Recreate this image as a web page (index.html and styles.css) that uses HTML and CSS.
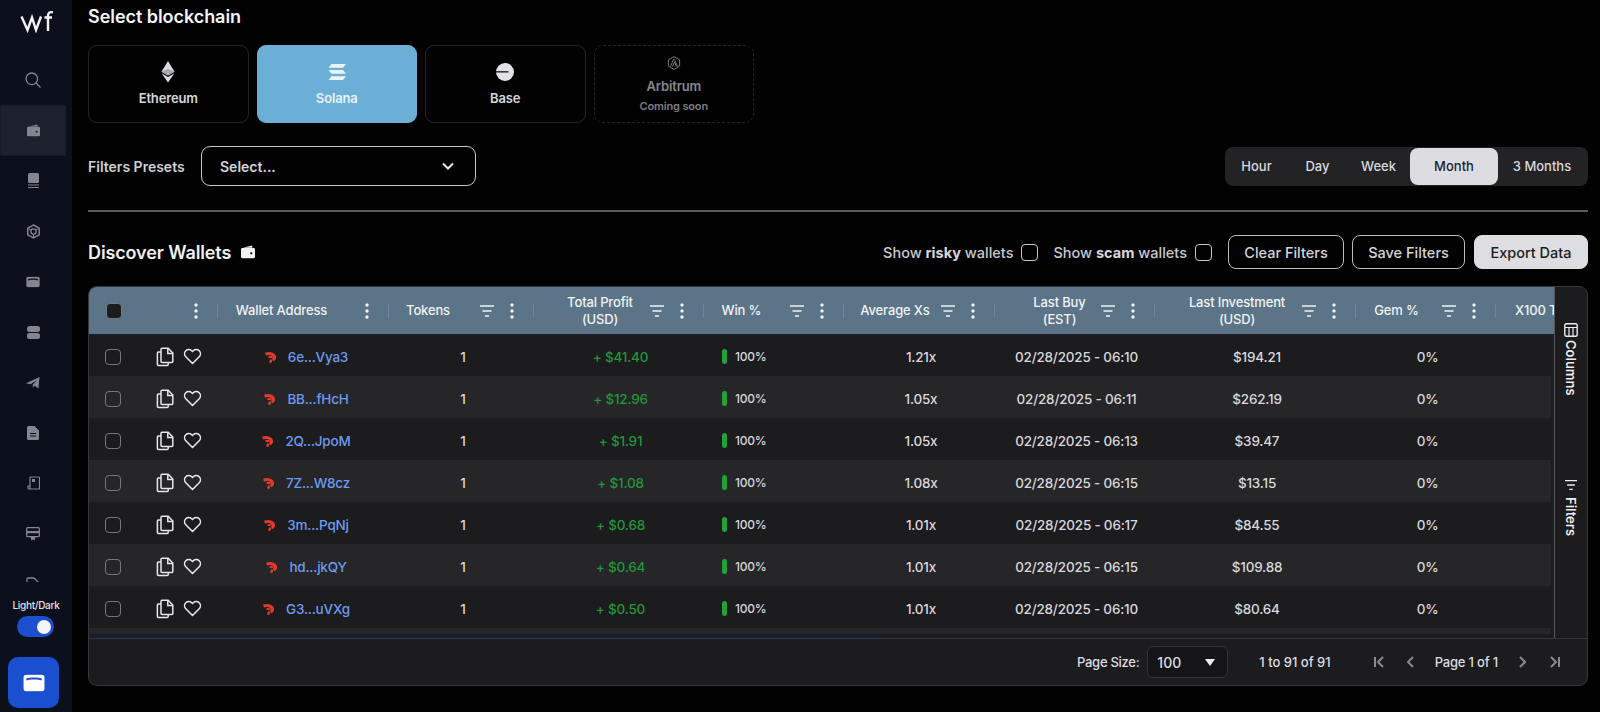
FILE: index.html
```html
<!DOCTYPE html>
<html lang="en">
<head>
<meta charset="utf-8">
<title>Discover Wallets</title>
<link rel="stylesheet" href="styles.css">
</head>
<body>
<svg class="defs" width="0" height="0" aria-hidden="true">
  <symbol id="i-filter" viewBox="0 0 16 14"><path d="M1 2h14M3.500 7h9M6 12h4" fill="none" stroke="currentColor" stroke-width="1.500"/></symbol>
  <symbol id="i-dots" viewBox="0 0 6 16"><circle cx="3" cy="2" r="1.700" fill="currentColor"/><circle cx="3" cy="8" r="1.700" fill="currentColor"/><circle cx="3" cy="14" r="1.700" fill="currentColor"/></symbol>
  <symbol id="i-copy" viewBox="0 0 18 20"><path d="M6 1.200h6.200L16.800 6v8.400a1 1 0 0 1-1 1H6a1 1 0 0 1-1-1V2.200a1 1 0 0 1 1-1z" fill="none" stroke="currentColor" stroke-width="1.500"/><path d="M11.800 1.500v5h4.800" fill="none" stroke="currentColor" stroke-width="1.500"/><path d="M5 5H2.400a1 1 0 0 0-1 1v11.600a1 1 0 0 0 1 1h8.800a1 1 0 0 0 1-1V15.400" fill="none" stroke="currentColor" stroke-width="1.500"/></symbol>
  <symbol id="i-heart" viewBox="0 0 20 18"><path d="M10 16.400 2.900 9.300a4.500 4.500 0 0 1 0-6.300 4.400 4.400 0 0 1 6.300 0l.8.800.8-.800a4.400 4.400 0 0 1 6.300 0 4.500 4.500 0 0 1 0 6.300z" fill="none" stroke="currentColor" stroke-width="1.600" stroke-linejoin="round"/></symbol>
  <symbol id="i-shrimp" viewBox="0 0 16 14"><path d="M0.500 1 4 3" fill="none" stroke="#3a1512" stroke-width="1"/><path d="M3.500 4C7 3 10.500 3.500 12 5.500c1 1.800.4 3.500-1.300 4.500" fill="none" stroke="#e23a2c" stroke-width="3"/><path d="M6.500 7h4" fill="none" stroke="#e23a2c" stroke-width="1.800"/><path d="M9.500 9.500 8 12.800" fill="none" stroke="#e23a2c" stroke-width="2.400"/></symbol>
  <symbol id="i-wallet" viewBox="0 0 18 16"><path d="M3 3.200 12.500.800c.9-.2 1.500.3 1.500 1.200v1.200z" fill="currentColor"/><path d="M2.500 3.500h13A1.500 1.500 0 0 1 17 5v8.500a1.500 1.500 0 0 1-1.500 1.500h-13A1.500 1.500 0 0 1 1 13.500V5a1.500 1.500 0 0 1 1.500-1.500zM12.800 8.200a1.300 1.300 0 1 0 0 2.600 1.300 1.300 0 0 0 0-2.600z" fill="currentColor" fill-rule="evenodd"/></symbol>
  <symbol id="i-card" viewBox="0 0 20 16"><path d="M3 .5h14A2.500 2.500 0 0 1 19.500 3v10a2.500 2.500 0 0 1-2.500 2.500H3A2.500 2.500 0 0 1 .5 13V3A2.500 2.500 0 0 1 3 .5zM3 4v1.800C6 4.500 14 4.500 17 5.800V4C14 2.800 6 2.800 3 4z" fill="currentColor" fill-rule="evenodd"/></symbol>
</svg>

<aside class="sidebar">
  <div class="logo" role="img" aria-label="wf logo">
    <svg width="34" height="24" viewBox="0 0 34 24"><path d="M1.500 7.500 7.500 21 12 8.500 16 21 21 7.500" fill="none" stroke="#f4f4f6" stroke-width="2.400"/><path d="M33 3.400C29.500 2.400 28 3.800 28 7v15M24.500 8.500H32" fill="none" stroke="#f4f4f6" stroke-width="2.400"/></svg>
  </div>
  <nav class="nav">
    <a class="nav-item"><svg width="18" height="18" viewBox="0 0 18 18"><circle cx="7.800" cy="7.800" r="5.800" fill="none" stroke="currentColor" stroke-width="1.300"/><path d="m12 12 4.500 4.500" stroke="currentColor" stroke-width="1.300"/></svg></a>
    <a class="nav-item nav-item-active"><svg width="15" height="13" viewBox="0 0 18 16"><use href="#i-wallet"/></svg></a>
    <a class="nav-item"><svg width="13" height="16" viewBox="0 0 13 16"><rect x="1" y="0" width="11" height="10" rx="1.500" fill="currentColor"/><path d="M1 12h11M1 14.500h11" stroke="currentColor" stroke-width="1.200"/></svg></a>
    <a class="nav-item"><svg width="15" height="15" viewBox="0 0 15 15"><path d="M7.500 1 13.200 4.200v6.600L7.500 14 1.800 10.800V4.200z" fill="none" stroke="currentColor" stroke-width="1.500"/><circle cx="7.500" cy="7.500" r="2.600" fill="none" stroke="currentColor" stroke-width="1.300"/><path d="M7.500 10v3.500M5.200 6.200 2.500 4.500M9.800 6.200l2.700-1.700" stroke="currentColor" stroke-width="1"/></svg></a>
    <a class="nav-item"><svg width="14" height="12" viewBox="0 0 20 16"><use href="#i-card"/></svg></a>
    <a class="nav-item"><svg width="13" height="13" viewBox="0 0 13 13"><rect x="0" y="0" width="13" height="6" rx="2.500" fill="currentColor"/><rect x="0" y="7" width="13" height="6" rx="2.500" fill="currentColor"/></svg></a>
    <a class="nav-item"><svg width="14" height="12" viewBox="0 0 14 12"><path d="M0 6.300 13.500 0 12.500 11.500 8.500 8.800 6.800 11V7.500L11 3 4.500 7.300z" fill="currentColor"/></svg></a>
    <a class="nav-item"><svg width="12" height="14" viewBox="0 0 12 14"><path d="M1.500 0h6L12 4.500v8a1.500 1.500 0 0 1-1.500 1.500h-9A1.500 1.500 0 0 1 0 12.500v-11A1.500 1.500 0 0 1 1.500 0zM3 7v1h6V7zM3 9.500v1h6v-1z" fill="currentColor" fill-rule="evenodd"/></svg></a>
    <a class="nav-item"><svg width="13" height="14" viewBox="0 0 13 14"><path d="M3 13V2a1 1 0 0 1 1-1h7.500a1 1 0 0 1 1 1v11H3zM3 10H1v2a1 1 0 0 0 1 1h8" fill="none" stroke="currentColor" stroke-width="1.200"/><rect x="5" y="3" width="3" height="3" fill="currentColor"/></svg></a>
    <a class="nav-item"><svg width="14" height="14" viewBox="0 0 14 14"><rect x=".7" y=".7" width="12.600" height="9" rx="1" fill="none" stroke="currentColor" stroke-width="1.300"/><rect x=".7" y="4" width="12.600" height="2.200" fill="currentColor"/><path d="M4.500 10h5l-1 3.500-1.500-1-1.500 1z" fill="currentColor"/></svg></a>
    <a class="nav-item"><svg width="14" height="14" viewBox="0 0 14 14"><path d="M1 13V2a1 1 0 0 1 1-1h6l4 4v8" fill="none" stroke="currentColor" stroke-width="1.300"/></svg></a>
  </nav>
  <div class="theme">
    <span class="theme-label">Light/Dark</span>
    <span class="toggle"><span class="toggle-knob"></span></span>
  </div>
  <a class="wallet-btn"><svg width="22" height="18" viewBox="0 0 20 16"><use href="#i-card"/></svg></a>
</aside>

<main class="main">
  <h2 class="section-title">Select blockchain</h2>
  <div class="chains">
    <button class="chain">
      <span class="chain-icon"><svg width="14" height="22" viewBox="0 0 14 22"><path d="M7 0 13.500 10.700 7 14.500.5 10.700z" fill="#dcdce0"/><path d="M7 16 13.500 12.200 7 21.500.5 12.200z" fill="#dcdce0"/><path d="M.5 10.700 7 7.800l6.500 2.900L7 14.500z" fill="#a9a9b0"/></svg></span>
      <span class="chain-name">Ethereum</span>
    </button>
    <button class="chain chain-active">
      <span class="chain-icon"><svg width="18" height="16" viewBox="0 0 18 16"><path d="M3.500 0H18l-3 3.800H.5zM.5 6h14.500l3 3.800H3.500zM3.500 12.200H18L15 16H.5z" fill="#eaf4fa"/></svg></span>
      <span class="chain-name">Solana</span>
    </button>
    <button class="chain">
      <span class="chain-icon"><svg width="18" height="18" viewBox="0 0 18 18"><circle cx="9" cy="9" r="9" fill="#e2e2e6"/><rect x="0" y="8.200" width="12.500" height="1.300" fill="#111"/></svg></span>
      <span class="chain-name">Base</span>
    </button>
    <button class="chain chain-soon">
      <svg width="14" height="14" viewBox="0 0 14 14"><path d="M7 .6 12.600 3.800v6.400L7 13.400 1.400 10.200V3.800z" fill="none" stroke="#77777c" stroke-width="1"/><path d="M3.500 10.500 6.500 3.500h1L10.500 10.500M5.500 10.500l2-4.500 2 4.500" fill="none" stroke="#77777c" stroke-width="1"/></svg>
      <span class="chain-name">Arbitrum</span>
      <span class="chain-note">Coming soon</span>
    </button>
  </div>

  <div class="filters-row">
    <span class="filters-label">Filters Presets</span>
    <div class="select">
      <span>Select...</span>
      <svg width="14" height="9" viewBox="0 0 14 9"><path d="m2 1.500 5 5 5-5" fill="none" stroke="#e6e6ea" stroke-width="2"/></svg>
    </div>
    <div class="periods">
      <span class="period">Hour</span>
      <span class="period">Day</span>
      <span class="period">Week</span>
      <span class="period period-active">Month</span>
      <span class="period">3 Months</span>
    </div>
  </div>

  <hr class="divider">

  <div class="discover-row">
    <h2 class="discover-title">Discover Wallets</h2>
    <svg class="discover-icon" width="16" height="14" viewBox="0 0 18 16"><use href="#i-wallet"/></svg>
    <label class="check-label"><span>Show <b>risky</b> wallets</span><span class="check-box"></span></label>
    <label class="check-label"><span>Show <b>scam</b> wallets</span><span class="check-box"></span></label>
    <button class="btn">Clear Filters</button>
    <button class="btn">Save Filters</button>
    <button class="btn btn-solid">Export Data</button>
  </div>

  <section class="grid">
    <div class="grid-body">
      <div class="grid-main">
        <div class="row head">
          <div class="hc hc-select"><span class="cb cb-head"></span><svg class="dots" width="6" height="16"><use href="#i-dots"/></svg></div>
          <div class="hc"><span class="hc-title t-wallet">Wallet Address</span><svg class="dots" width="6" height="16"><use href="#i-dots"/></svg></div>
          <div class="hc"><span class="hc-title t-tokens">Tokens</span><svg class="fil" width="16" height="14"><use href="#i-filter"/></svg><svg class="dots" width="6" height="16"><use href="#i-dots"/></svg></div>
          <div class="hc"><span class="hc-title t-profit">Total Profit<br>(USD)</span><svg class="fil" width="16" height="14"><use href="#i-filter"/></svg><svg class="dots" width="6" height="16"><use href="#i-dots"/></svg></div>
          <div class="hc"><span class="hc-title t-win">Win %</span><svg class="fil" width="16" height="14"><use href="#i-filter"/></svg><svg class="dots" width="6" height="16"><use href="#i-dots"/></svg></div>
          <div class="hc"><span class="hc-title t-avg">Average Xs</span><svg class="fil" width="16" height="14"><use href="#i-filter"/></svg><svg class="dots" width="6" height="16"><use href="#i-dots"/></svg></div>
          <div class="hc"><span class="hc-title t-buy">Last Buy<br>(EST)</span><svg class="fil" width="16" height="14"><use href="#i-filter"/></svg><svg class="dots" width="6" height="16"><use href="#i-dots"/></svg></div>
          <div class="hc"><span class="hc-title t-invest">Last Investment<br>(USD)</span><svg class="fil" width="16" height="14"><use href="#i-filter"/></svg><svg class="dots" width="6" height="16"><use href="#i-dots"/></svg></div>
          <div class="hc"><span class="hc-title t-gem">Gem %</span><svg class="fil" width="16" height="14"><use href="#i-filter"/></svg><svg class="dots" width="6" height="16"><use href="#i-dots"/></svg></div>
          <div class="hc hc-last"><span class="hc-title">X100 Tokens</span></div>
        </div>

        <div class="row">
          <div class="c c-select"><span class="cb"></span><svg class="copy" width="18" height="20"><use href="#i-copy"/></svg><svg class="heart" width="19" height="17" viewBox="0 0 20 18"><use href="#i-heart"/></svg></div>
          <div class="c"><svg class="shrimp" width="16" height="14"><use href="#i-shrimp"/></svg><a class="addr">6e...Vya3</a></div>
          <div class="c">1</div><div class="c c-profit">+ $41.40</div>
          <div class="c c-win"><span class="bar"></span>100%</div>
          <div class="c">1.21x</div><div class="c">02/28/2025 - 06:10</div><div class="c">$194.21</div><div class="c">0%</div><div class="c"></div>
        </div>
        <div class="row alt">
          <div class="c c-select"><span class="cb"></span><svg class="copy" width="18" height="20"><use href="#i-copy"/></svg><svg class="heart" width="19" height="17" viewBox="0 0 20 18"><use href="#i-heart"/></svg></div>
          <div class="c"><svg class="shrimp" width="16" height="14"><use href="#i-shrimp"/></svg><a class="addr">BB...fHcH</a></div>
          <div class="c">1</div><div class="c c-profit">+ $12.96</div>
          <div class="c c-win"><span class="bar"></span>100%</div>
          <div class="c">1.05x</div><div class="c">02/28/2025 - 06:11</div><div class="c">$262.19</div><div class="c">0%</div><div class="c"></div>
        </div>
        <div class="row">
          <div class="c c-select"><span class="cb"></span><svg class="copy" width="18" height="20"><use href="#i-copy"/></svg><svg class="heart" width="19" height="17" viewBox="0 0 20 18"><use href="#i-heart"/></svg></div>
          <div class="c"><svg class="shrimp" width="16" height="14"><use href="#i-shrimp"/></svg><a class="addr">2Q...JpoM</a></div>
          <div class="c">1</div><div class="c c-profit">+ $1.91</div>
          <div class="c c-win"><span class="bar"></span>100%</div>
          <div class="c">1.05x</div><div class="c">02/28/2025 - 06:13</div><div class="c">$39.47</div><div class="c">0%</div><div class="c"></div>
        </div>
        <div class="row alt">
          <div class="c c-select"><span class="cb"></span><svg class="copy" width="18" height="20"><use href="#i-copy"/></svg><svg class="heart" width="19" height="17" viewBox="0 0 20 18"><use href="#i-heart"/></svg></div>
          <div class="c"><svg class="shrimp" width="16" height="14"><use href="#i-shrimp"/></svg><a class="addr">7Z...W8cz</a></div>
          <div class="c">1</div><div class="c c-profit">+ $1.08</div>
          <div class="c c-win"><span class="bar"></span>100%</div>
          <div class="c">1.08x</div><div class="c">02/28/2025 - 06:15</div><div class="c">$13.15</div><div class="c">0%</div><div class="c"></div>
        </div>
        <div class="row">
          <div class="c c-select"><span class="cb"></span><svg class="copy" width="18" height="20"><use href="#i-copy"/></svg><svg class="heart" width="19" height="17" viewBox="0 0 20 18"><use href="#i-heart"/></svg></div>
          <div class="c"><svg class="shrimp" width="16" height="14"><use href="#i-shrimp"/></svg><a class="addr">3m...PqNj</a></div>
          <div class="c">1</div><div class="c c-profit">+ $0.68</div>
          <div class="c c-win"><span class="bar"></span>100%</div>
          <div class="c">1.01x</div><div class="c">02/28/2025 - 06:17</div><div class="c">$84.55</div><div class="c">0%</div><div class="c"></div>
        </div>
        <div class="row alt">
          <div class="c c-select"><span class="cb"></span><svg class="copy" width="18" height="20"><use href="#i-copy"/></svg><svg class="heart" width="19" height="17" viewBox="0 0 20 18"><use href="#i-heart"/></svg></div>
          <div class="c"><svg class="shrimp" width="16" height="14"><use href="#i-shrimp"/></svg><a class="addr">hd...jkQY</a></div>
          <div class="c">1</div><div class="c c-profit">+ $0.64</div>
          <div class="c c-win"><span class="bar"></span>100%</div>
          <div class="c">1.01x</div><div class="c">02/28/2025 - 06:15</div><div class="c">$109.88</div><div class="c">0%</div><div class="c"></div>
        </div>
        <div class="row">
          <div class="c c-select"><span class="cb"></span><svg class="copy" width="18" height="20"><use href="#i-copy"/></svg><svg class="heart" width="19" height="17" viewBox="0 0 20 18"><use href="#i-heart"/></svg></div>
          <div class="c"><svg class="shrimp" width="16" height="14"><use href="#i-shrimp"/></svg><a class="addr">G3...uVXg</a></div>
          <div class="c">1</div><div class="c c-profit">+ $0.50</div>
          <div class="c c-win"><span class="bar"></span>100%</div>
          <div class="c">1.01x</div><div class="c">02/28/2025 - 06:10</div><div class="c">$80.64</div><div class="c">0%</div><div class="c"></div>
        </div>
        <div class="scroll-strip"></div>
        <div class="scroll-thumb"></div>
      </div>
      <div class="side-tabs">
        <div class="side-tab side-tab-columns">
          <svg width="14" height="14" viewBox="0 0 14 14"><rect x=".8" y=".8" width="12.400" height="12.400" rx="1.500" fill="none" stroke="currentColor" stroke-width="1.400"/><path d="M1 4.500h12M5 4.500v9M9 4.500v9" stroke="currentColor" stroke-width="1.200"/></svg>
          <span>Columns</span>
        </div>
        <div class="side-tab side-tab-filters">
          <svg width="14" height="12" viewBox="0 0 16 14"><use href="#i-filter"/></svg>
          <span>Filters</span>
        </div>
      </div>
    </div>
    <footer class="pager">
      <span class="page-label">Page Size:</span>
      <span class="page-size"><span>100</span><svg width="10" height="7" viewBox="0 0 10 7"><path d="M0 0h10L5 7z" fill="#f0f0f2"/></svg></span>
      <span class="range">1 to 91 of 91</span>
      <span class="page-nav">
        <svg width="12" height="12" viewBox="0 0 12 12"><path d="M2 1v10M10 1 5 6l5 5" fill="none" stroke="#8a8a8e" stroke-width="2"/></svg>
        <svg class="nav-prev" width="10" height="12" viewBox="0 0 10 12"><path d="M8 1 3 6l5 5" fill="none" stroke="#8a8a8e" stroke-width="2"/></svg>
        <span class="page-text">Page 1 of 1</span>
        <svg width="10" height="12" viewBox="0 0 10 12"><path d="m2 1 5 5-5 5" fill="none" stroke="#8a8a8e" stroke-width="2"/></svg>
        <svg class="nav-last" width="12" height="12" viewBox="0 0 12 12"><path d="M10 1v10M2 1l5 5-5 5" fill="none" stroke="#8a8a8e" stroke-width="2"/></svg>
      </span>
    </footer>
  </section>
</main>
</body>
</html>
```
FILE: styles.css
```css
* { box-sizing: border-box; }
html, body { height: 100%; }
body {
  margin: 0;
  height: 712px;
  overflow: hidden;
  display: flex;
  background: #020203;
  color: #e8e8ec;
  font-family: Inter, "Liberation Sans", sans-serif;
  font-size: 14px;
  font-weight: 500;
}
.defs { position: absolute; }
svg { display: block; flex: none; }

/* sidebar */
.sidebar {
  width: 72px;
  flex: none;
  height: 712px;
  background: #0c0f1c;
  display: flex;
  flex-direction: column;
  align-items: stretch;
  color: #85858f;
}
.logo { height: 55px; padding: 9px 0 0 20px; }
.nav { height: 527px; overflow: hidden; display: flex; flex-direction: column; }
.nav-item {
  flex: none;
  width: 66px;
  height: 50.4px;
  display: flex;
  align-items: center;
  justify-content: center;
}
.nav-item-active { background: #1d202d; border: 1px solid #181b27; }
.theme { display: flex; flex-direction: column; align-items: center; margin-top: 16px; }
.theme-label { font-size: 10px; line-height: 14px; color: #e0e0e4; letter-spacing: -.3px; }
.toggle {
  width: 37px;
  height: 21px;
  margin-top: 4px;
  margin-left: -2px;
  border-radius: 11px;
  background: #1c4ed0;
  display: flex;
  align-items: center;
  justify-content: flex-end;
  padding-right: 3px;
}
.toggle-knob { width: 14px; height: 14px; border-radius: 50%; background: #f5f5f7; }
.wallet-btn {
  width: 51px;
  height: 51px;
  margin: 20px 0 0 8px;
  border-radius: 10px;
  background: #1a4fd0;
  color: #fff;
  display: flex;
  align-items: center;
  justify-content: center;
}

/* main */
.main {
  flex: 1;
  min-width: 0;
  padding: 0 12px 0 16px;
  display: flex;
  flex-direction: column;
}
.section-title {
  margin: 6px 0 0;
  font-size: 18px;
  line-height: 22px;
  font-weight: 600;
  letter-spacing: -.05px;
  color: #f4f4f6;
}
.chains { display: flex; gap: 8px; margin-top: 17px; }
.chain {
  width: 160.500px;
  height: 78px;
  border: 1px solid #242428;
  border-radius: 9px;
  background: transparent;
  color: #d6d6da;
  font: inherit;
  font-size: 13px;
  font-weight: 600;
  letter-spacing: -.15px;
  padding: 15px 0 0;
  display: flex;
  flex-direction: column;
  align-items: center;
  justify-content: flex-start;
}
.chain-icon { height: 22px; display: flex; align-items: center; margin-bottom: 7px; }
.chain-active { background: #6cafd6; border-color: #6cafd6; color: #e8f2f8; }
.chain-soon {
  border-style: dashed;
  color: #87878c;
  padding-top: 10px;
}
.chain-soon .chain-name { margin-top: 8px; }
.chain-note { font-size: 11px; line-height: 14px; margin-top: 5px; color: #7c7c80; }
.chain-name { line-height: 16px; }

.filters-row { display: flex; align-items: center; margin-top: 23px; height: 40px; }
.filters-label { font-weight: 600; font-size: 14px; color: #cfcfd4; width: 113px; }
.select {
  width: 275px;
  height: 40px;
  border: 1.5px solid #c8c8cc;
  border-radius: 9px;
  display: flex;
  align-items: center;
  justify-content: space-between;
  padding: 0 20px 0 18px;
  color: #d4d4d8;
  font-size: 14px;
  font-weight: 600;
}
.periods {
  margin-left: auto;
  width: 363px;
  height: 39px;
  background: #232326;
  border-radius: 8px;
  display: flex;
  align-items: center;
  padding: 1px 2px 1px 0;
  color: #d8d8dc;
  font-size: 13px;
}
.period { flex: none; width: 62px; text-align: center; }
.period-active {
  width: 88px;
  height: 37px;
  line-height: 37px;
  background: #dddde1;
  color: #1c2230;
  border-radius: 8px;
}
.period:first-child { width: 63px; }
.period:nth-child(2) { width: 59px; }
.period:nth-child(3) { width: 63px; }
.period:last-child { flex: 1; }

.divider { width: 100%; height: 2px; margin: 24px 0 0; border: 0; background: #5a5a5e; flex: none; }

.discover-row { display: flex; align-items: center; height: 34px; margin-top: 23px; }
.discover-title { margin: 0; font-size: 18px; font-weight: 600; letter-spacing: -.12px; color: #f0f0f2; }
.discover-icon { margin-left: 9px; color: #f2f2f4; }
.check-label { display: flex; align-items: center; gap: 8px; color: #c8c8cc; font-size: 14.500px; }
.check-label b { font-weight: 700; color: #d8d8dc; }
.check-label:first-of-type { margin-left: auto; }
.check-label + .check-label { margin-left: 15px; }
.check-box { width: 17px; height: 17px; border: 1.5px solid #c8c8cc; border-radius: 4px; }
.btn {
  height: 34px;
  margin-left: 16px;
  padding: 0;
  width: 116px;
  border: 1.5px solid #bcbcc0;
  border-radius: 8px;
  background: transparent;
  color: #d4d4d8;
  font: inherit;
  font-size: 14.500px;
}
.btn + .btn { margin-left: 8px; width: 113px; }
.btn.btn-solid { background: #dedee2; border-color: #dedee2; color: #1c1c20; width: 114px; margin-left: 9px; }

/* grid */
.grid {
  margin-top: 17px;
  height: 400px;
  border: 1px solid #38383c;
  border-radius: 9px;
  background: #1c1b1e;
  overflow: hidden;
  display: flex;
  flex-direction: column;
  flex: none;
}
.grid-body { display: flex; height: 351px; flex: none; }
.grid-main { width: 1465px; flex: none; overflow: hidden; }
.row {
  display: grid;
  width: 1462px;
  grid-template-columns: 129px 171px 145px 170px 140px 151px 160px 201px 140px 58px;
  height: 42px;
  background: #1c1b1e;
  color: #d8d8dc;
  font-weight: 550;
}
.row.alt { background: #262528; }
.row.head { width: auto; height: 47px; background: #5b7488; color: #f0f2f4; font-size: 13px; }
.hc {
  position: relative;
  display: flex;
  align-items: center;
  padding-right: 8px;
  line-height: 17px;
  text-align: center;
}
.hc::after {
  content: "";
  position: absolute;
  right: 0;
  top: 17px;
  width: 1px;
  height: 14px;
  background: #6e8698;
}
.hc-last::after { display: none; }
.hc-title { flex: 1; letter-spacing: -.15px; }
.t-wallet { padding-right: 5px; }
.t-tokens { padding-right: 6px; }
.t-profit { padding-left: 23px; }
.t-win { padding-right: 4px; }
.t-avg { padding-left: 12px; }
.t-buy { padding-left: 30px; }
.t-invest { padding-left: 24px; }
.t-gem { padding-left: 2px; }
.hc-last { padding-left: 19px; }
.hc-last .hc-title { white-space: nowrap; text-align: left; }
.hc-select { padding-left: 17px; }
.hc-select .dots { margin-left: auto; }
.fil { color: #f0f2f4; margin-left: 6px; }
.dots { color: #f0f2f4; margin: 0 11px 0 14px; }
.c {
  display: flex;
  align-items: center;
  justify-content: center;
  font-size: 13.500px;
  letter-spacing: -.2px;
  padding: 3px 0 0 3px;
}
.c.c-select { justify-content: flex-start; padding-left: 16px; color: #e8e8ec; }
.cb {
  width: 16px;
  height: 16px;
  border: 1.500px solid #77777b;
  border-radius: 4px;
  display: block;
  flex: none;
  margin-right: 35px;
}
.cb-head { margin: 0; border-color: #6a7c8c; background: #1c1b1e; }
.copy { margin-right: 9px; }
.shrimp { margin-right: 10px; }
.addr { color: #6d9bf0; font-size: 13.500px; }
.c-profit { color: #22963a; }
.c.c-win { justify-content: flex-start; padding-left: 18px; font-size: 12px; }
.bar { width: 5px; height: 15px; border-radius: 3px; background: #22a03c; margin-right: 8px; }
.scroll-strip { width: 1462px; height: 6px; background: #262528; }
.scroll-thumb { width: 790px; height: 3px; margin-top: 1px; background: #161c36; }

.side-tabs {
  flex: 1;
  border-left: 1px solid #55555a;
  color: #eeeef0;
  font-weight: 600;
  font-size: 13px;
}
.side-tab {
  display: flex;
  flex-direction: column;
  align-items: center;
  gap: 3px;
  padding-top: 36px;
  height: 192px;
}
.side-tab span { writing-mode: vertical-rl; }
.side-tab.side-tab-filters { padding-top: 0; gap: 6px; height: 150px; }

.pager {
  flex: 1;
  border-top: 1px solid #38383c;
  display: flex;
  align-items: center;
  padding-left: 988px;
  color: #dcdce0;
  font-size: 13px;
}
.page-label { letter-spacing: -.28px; }
.page-size {
  width: 81px;
  height: 32px;
  margin-left: 8px;
  border: 1px solid #343438;
  border-radius: 6px;
  background: #151417;
  display: flex;
  align-items: center;
  justify-content: space-between;
  padding: 0 12px 0 9px;
  font-size: 14px;
}
.range { margin-left: 31px; }
.page-nav { display: flex; align-items: center; margin-left: 42px; }
.nav-prev { margin-left: 20px; }
.page-text { margin: 0 20px; letter-spacing: -.2px; }
.nav-last { margin-left: 21px; }
```
